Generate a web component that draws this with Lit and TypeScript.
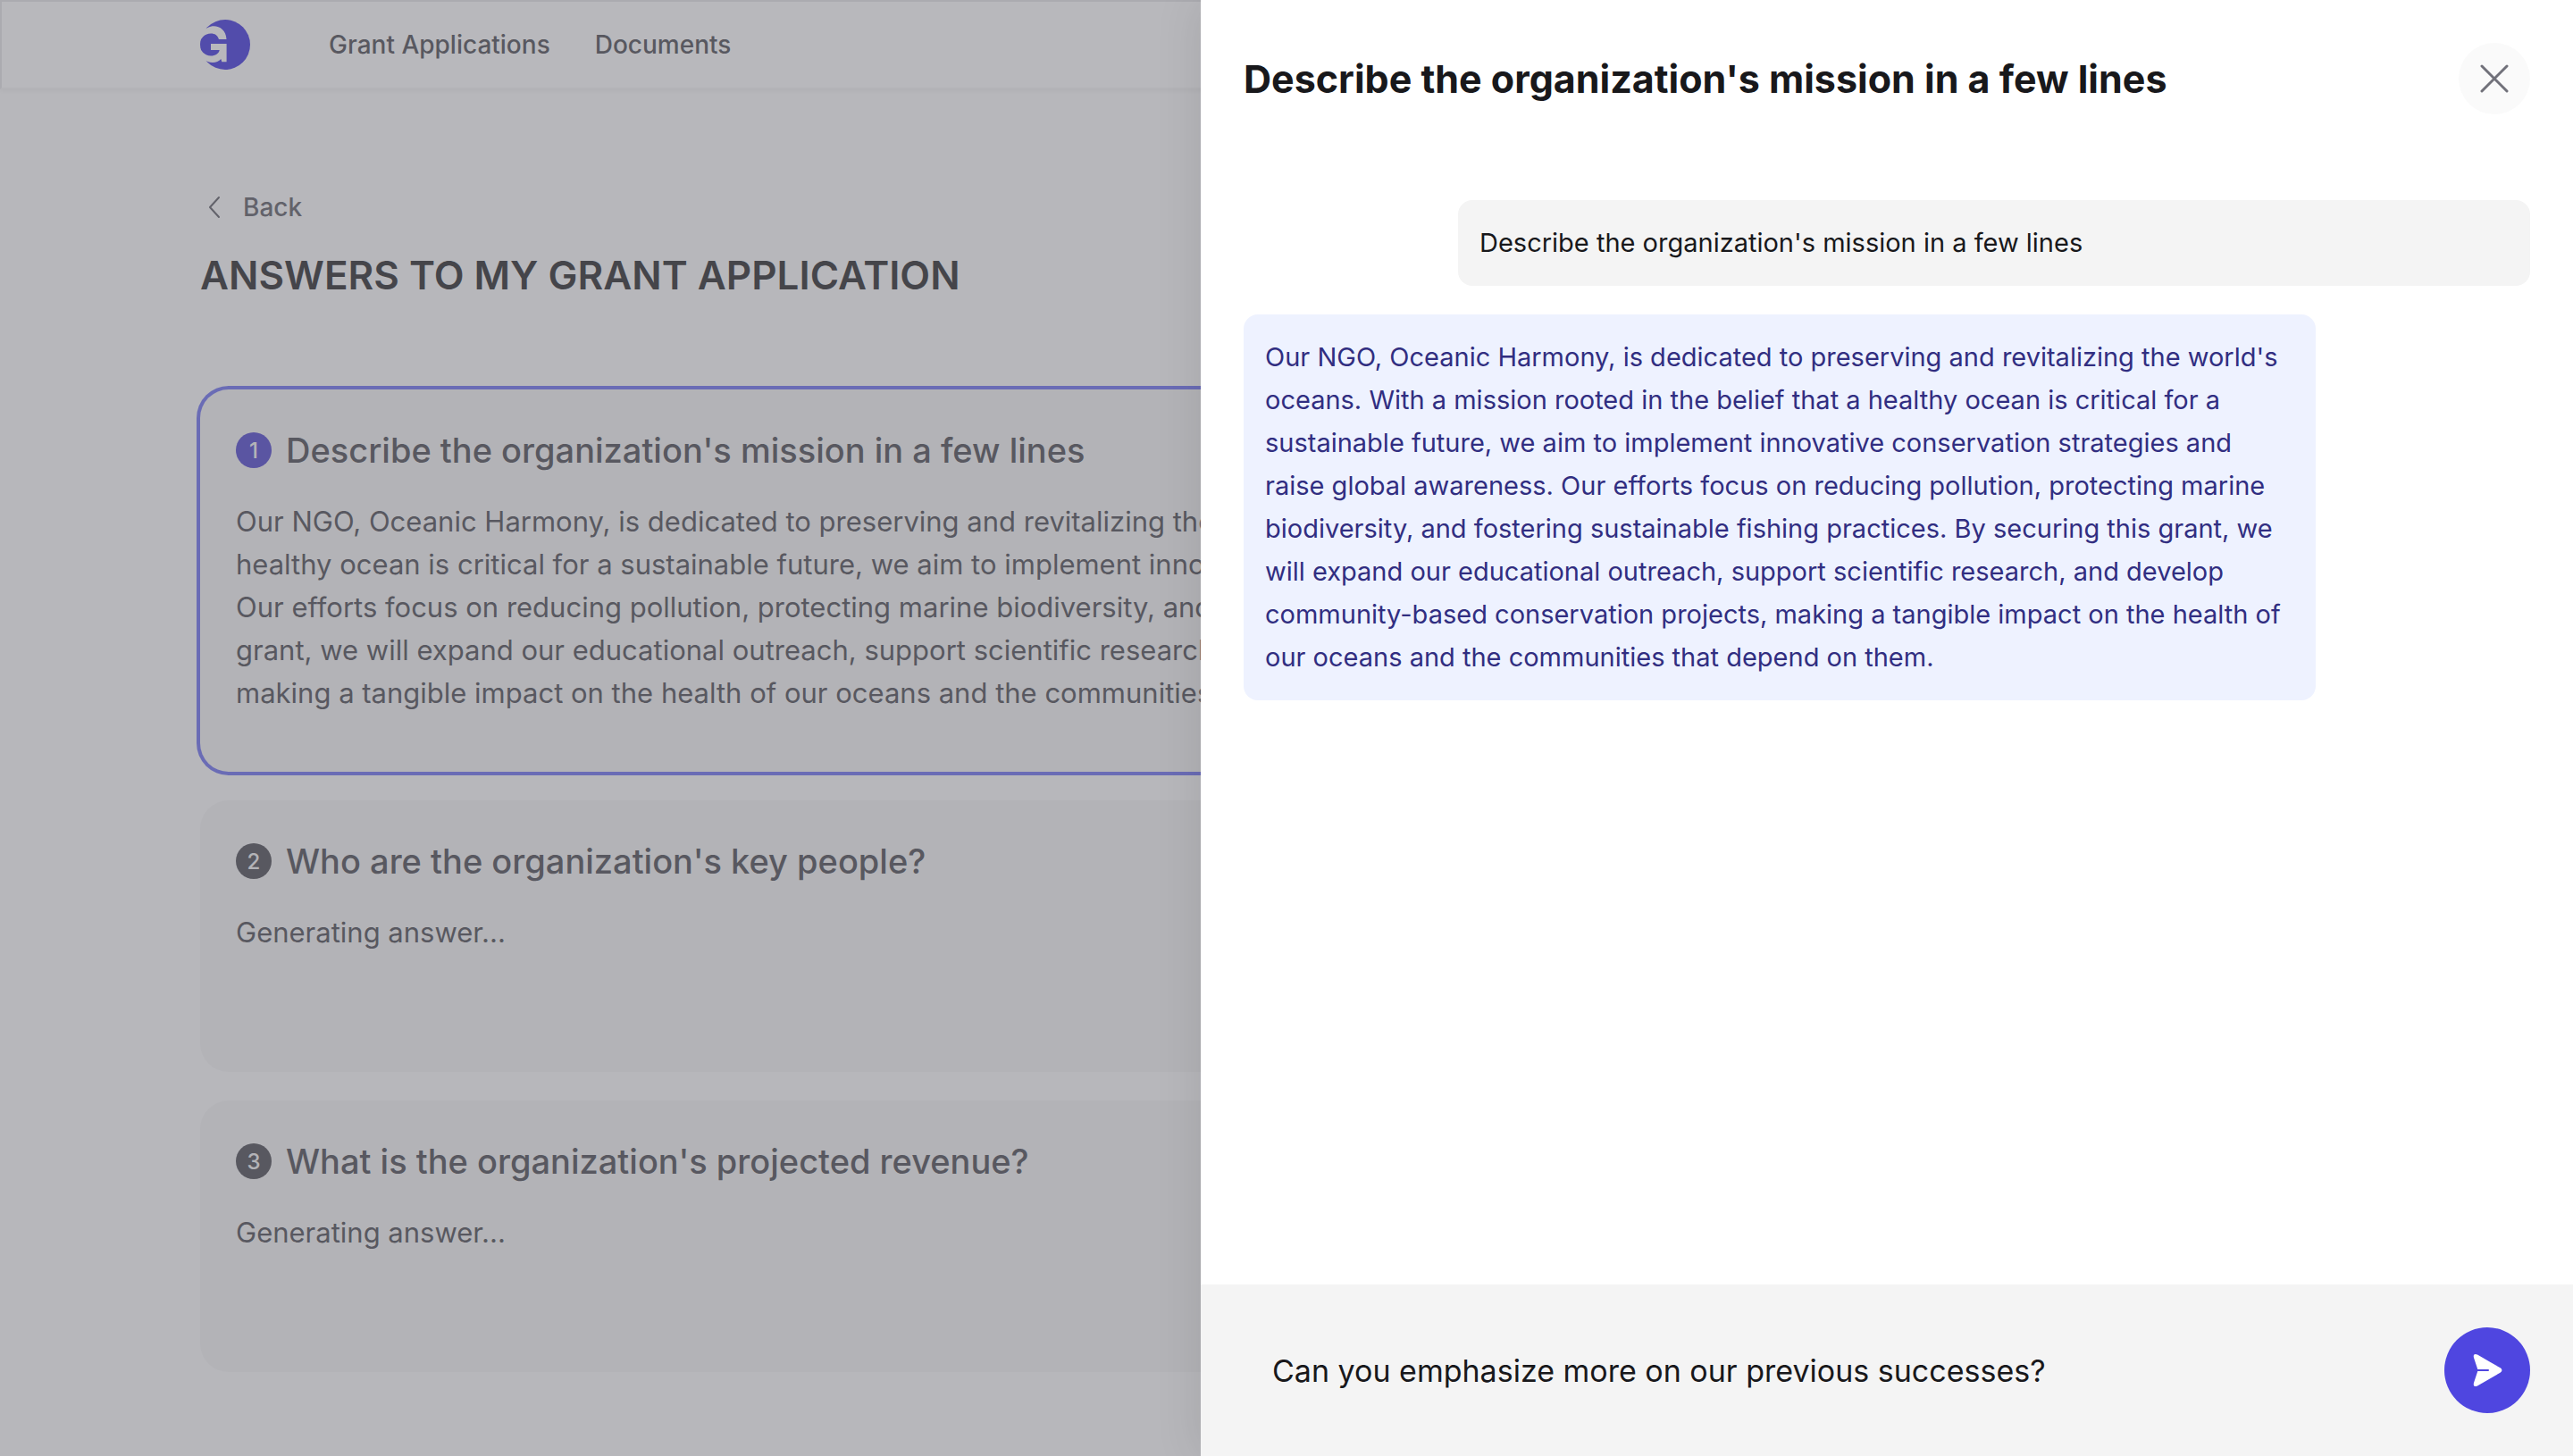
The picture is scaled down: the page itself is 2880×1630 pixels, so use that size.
import { LitElement, html, css } from "lit";
import { customElement, state } from "lit/decorators.js";

const MISSION =
  "Our NGO, Oceanic Harmony, is dedicated to preserving and revitalizing the world's oceans. With a mission rooted in the belief that a healthy ocean is critical for a sustainable future, we aim to implement innovative conservation strategies and raise global awareness. Our efforts focus on reducing pollution, protecting marine biodiversity, and fostering sustainable fishing practices. By securing this grant, we will expand our educational outreach, support scientific research, and develop community-based conservation projects, making a tangible impact on the health of our oceans and the communities that depend on them.";

interface Answer {
  question: string;
  answer: string;
}

const ANSWERS: Answer[] = [
  { question: "Describe the organization's mission in a few lines", answer: MISSION },
  { question: "Who are the organization's key people?", answer: "Generating answer..." },
  { question: "What is the organization's projected revenue?", answer: "Generating answer..." },
];

@customElement("answers-page")
class AnswersPage extends LitElement {
  static styles = css`
    :host {
      display: block;
      color: #3f3f46;
    }
    .header {
      display: flex;
      align-items: center;
      gap: 88px;
      height: 96px;
      padding: 0 222px;
      border: 2px solid #e4e4e7;
      border-bottom-color: #f4f4f5;
      background: #fff;
      box-shadow: 0 2px 4px rgba(0, 0, 0, 0.05);
    }
    .logo {
      display: block;
      width: 56px;
      height: 56px;
    }
    .nav {
      display: flex;
      gap: 50px;
    }
    .nav a,
    .back {
      color: inherit;
      font-size: 28px;
      font-weight: 500;
      line-height: 40px;
      text-decoration: none;
    }
    .main {
      padding: 112px 224px 0;
    }
    .back {
      display: inline-flex;
      align-items: center;
      gap: 16px;
      color: #52525b;
    }
    .back svg {
      width: 32px;
      height: 32px;
    }
    .title {
      margin: 24px 0 0;
      color: #18181b;
      font-size: 44px;
      font-weight: 600;
      line-height: 64px;
    }
    .list {
      display: flex;
      flex-direction: column;
      gap: 32px;
      margin: 96px 0 0;
      padding: 0;
      list-style: none;
    }
    .card {
      min-height: 304px;
      box-sizing: border-box;
      padding: 40px;
      border-radius: 32px;
      background: #f4f4f5;
    }
    .card.active {
      min-height: 428px;
      box-shadow: 0 0 0 4px #6366f1;
    }
    .head {
      display: flex;
      align-items: center;
      gap: 16px;
    }
    .badge {
      display: flex;
      align-items: center;
      justify-content: center;
      width: 40px;
      height: 40px;
      border-radius: 50%;
      background: #3f3f46;
      color: #f4f4f5;
      font-size: 24px;
      font-weight: 500;
    }
    .active .badge {
      background: #4338ca;
    }
    .question {
      margin: 0;
      font-size: 38px;
      font-weight: 500;
      line-height: 56px;
    }
    .answer {
      max-width: 1968px;
      margin: 28px 0 0;
      font-size: 31px;
      line-height: 48px;
    }
  `;

  render() {
    return html`
      <header class="header">
        <svg class="logo" viewBox="0 0 56 56" role="img" aria-label="Home">
          <circle cx="28" cy="28" r="28" fill="#3327dc" />
          <path
            fill="#fff"
            d="M-2 14 8.500 9C17 4.500 29 9 29.500 22H21C19.500 17.500 16.500 15.500 12 15.500A12.500 12.500 0 0 0-.5 28 12.500 12.500 0 0 0 12 40.500C17 40.500 21 38 21.700 34H12V27H29.600V47.300H24.300L23.300 44C20 48 14 49 8.500 47L-2 42Z"
          />
        </svg>
        <nav class="nav">
          <a href="#applications">Grant Applications</a>
          <a href="#documents">Documents</a>
        </nav>
      </header>
      <main class="main">
        <a class="back" href="#applications">
          <svg viewBox="0 0 32 32" fill="none" stroke="currentColor" stroke-width="2" stroke-linecap="round" stroke-linejoin="round" aria-hidden="true">
            <path d="M21 5 11 16l10 11" />
          </svg>
          Back
        </a>
        <h1 class="title">ANSWERS TO MY GRANT APPLICATION</h1>
        <ol class="list">
          ${ANSWERS.map(
            (item, i) => html`
              <li class="card ${i === 0 ? "active" : ""}">
                <div class="head">
                  <span class="badge">${i + 1}</span>
                  <h2 class="question">${item.question}</h2>
                </div>
                <p class="answer">${item.answer}</p>
              </li>
            `
          )}
        </ol>
      </main>
    `;
  }
}

@customElement("chat-drawer")
class ChatDrawer extends LitElement {
  @state() private draft = "Can you emphasize more on our previous successes?";

  static styles = css`
    :host {
      display: flex;
      flex-direction: column;
      background: #fff;
      color: #18181b;
    }
    .top {
      display: flex;
      align-items: center;
      justify-content: space-between;
      padding: 48px;
    }
    .title {
      margin: 0;
      font-size: 43px;
      font-weight: 700;
      line-height: 64px;
    }
    .close {
      display: flex;
      align-items: center;
      justify-content: center;
      width: 80px;
      height: 80px;
      padding: 0;
      border: 0;
      border-radius: 50%;
      background: #fafafa;
      color: #71717a;
    }
    .close svg {
      width: 48px;
      height: 48px;
    }
    .messages {
      flex: 1;
      display: flex;
      flex-direction: column;
      gap: 32px;
      padding: 48px;
    }
    .message {
      width: 1152px;
      max-width: 80%;
      margin: 0;
      padding: 24px;
      border-radius: 16px;
      font-size: 29px;
      line-height: 48px;
    }
    .mine {
      align-self: flex-end;
      background: #f4f4f4;
    }
    .reply {
      align-self: flex-start;
      background: #eef2ff;
      color: #312e81;
    }
    .composer {
      display: flex;
      align-items: center;
      gap: 32px;
      padding: 48px;
      background: #f4f4f4;
    }
    .input {
      flex: 1;
      min-width: 0;
      height: 96px;
      padding: 0 32px;
      border: 0;
      outline: none;
      background: transparent;
      color: inherit;
      font: inherit;
      font-size: 34px;
    }
    .send {
      display: flex;
      align-items: center;
      justify-content: center;
      width: 96px;
      height: 96px;
      padding: 0;
      border: 0;
      border-radius: 50%;
      background: #4f46e0;
      color: #fff;
    }
    .send svg {
      width: 48px;
      height: 48px;
    }
  `;

  private onInput(e: Event) {
    this.draft = (e.target as HTMLInputElement).value;
  }

  render() {
    return html`
      <div class="top">
        <h2 class="title">Describe the organization's mission in a few lines</h2>
        <button class="close" type="button" aria-label="Close">
          <svg viewBox="0 0 48 48" fill="none" stroke="currentColor" stroke-width="3" stroke-linecap="round" aria-hidden="true">
            <path d="M10 10 38 38M38 10 10 38" />
          </svg>
        </button>
      </div>
      <div class="messages">
        <p class="message mine">Describe the organization's mission in a few lines</p>
        <p class="message reply">${MISSION}</p>
      </div>
      <form class="composer" @submit=${(e: Event) => e.preventDefault()}>
        <input class="input" type="text" aria-label="Message" .value=${this.draft} @input=${this.onInput} />
        <button class="send" type="submit" aria-label="Send">
          <svg viewBox="0 0 48 48" aria-hidden="true">
            <path fill="currentColor" d="M9 10C8 6.500 10 5 13 6.600L38.500 21.300C41 22.800 41 25.200 38.500 26.700L13 41.400C10 43 8 41.500 9 38L13.300 25H25a1 1 0 0 0 0-2H13.300Z" />
          </svg>
        </button>
      </form>
    `;
  }
}

@customElement("app-root")
class AppRoot extends LitElement {
  static styles = css`
    :host {
      display: block;
      position: relative;
      height: 100vh;
      overflow: hidden;
      background: #fcfcfc;
      font-family: Inter, "Noto Sans", sans-serif;
    }
    .backdrop {
      position: absolute;
      inset: 0;
      display: flex;
      justify-content: flex-end;
      background: rgba(113, 113, 122, 0.5);
    }
    .drawer {
      width: 1536px;
      max-width: 100%;
      box-shadow: 0 0 50px rgba(0, 0, 0, 0.1);
    }
  `;

  render() {
    return html`
      <answers-page></answers-page>
      <div class="backdrop">
        <chat-drawer class="drawer" role="dialog" aria-label="Refine answer"></chat-drawer>
      </div>
    `;
  }
}
